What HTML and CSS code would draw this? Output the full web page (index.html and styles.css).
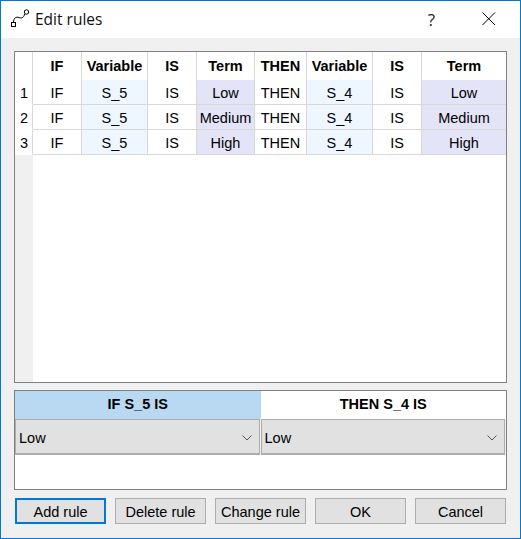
FILE: index.html
```html
<!DOCTYPE html>
<html lang="en">
<head>
<meta charset="utf-8">
<title>Edit rules</title>
<link rel="stylesheet" href="styles.css">
</head>
<body>
<div class="window">
  <header class="titlebar">
    <svg class="app-icon" width="20" height="20" viewBox="0 0 20 20" fill="none" stroke="#000" stroke-width="1">
      <rect x="0.5" y="13.5" width="4" height="4"/>
      <path d="M2.5 13.5 C2.5 9 5 7.5 8 8.5 C10.5 9.5 12.5 9 13.8 5"/>
      <circle cx="15.5" cy="3" r="2.2"/>
    </svg>
    <span class="title">Edit rules</span>
    <span class="help">?</span>
    <svg class="close" width="14" height="14" viewBox="0 0 14 14" fill="none" stroke="#000" stroke-width="1"><path d="M0.5 0.5 L13 13 M13 0.5 L0.5 13"/></svg>
  </header>
  <main class="content">
    <section class="table-box">
      <div class="grid">
        <div class="corner"></div>
        <div class="head">IF</div><div class="head">Variable</div><div class="head">IS</div><div class="head">Term</div><div class="head">THEN</div><div class="head">Variable</div><div class="head">IS</div><div class="head last">Term</div>

        <div class="rowno">1</div>
        <div class="cell">IF</div><div class="cell var">S_5</div><div class="cell">IS</div><div class="cell term">Low</div><div class="cell">THEN</div><div class="cell var">S_4</div><div class="cell">IS</div><div class="cell term last">Low</div>

        <div class="rowno">2</div>
        <div class="cell">IF</div><div class="cell var">S_5</div><div class="cell">IS</div><div class="cell term">Medium</div><div class="cell">THEN</div><div class="cell var">S_4</div><div class="cell">IS</div><div class="cell term last">Medium</div>

        <div class="rowno">3</div>
        <div class="cell">IF</div><div class="cell var">S_5</div><div class="cell">IS</div><div class="cell term">High</div><div class="cell">THEN</div><div class="cell var">S_4</div><div class="cell">IS</div><div class="cell term last">High</div>

        <div class="gutter"></div>
      </div>
    </section>
    <section class="editor">
      <div class="tabs">
        <div class="tab active">IF S_5 IS</div>
        <div class="tab">THEN S_4 IS</div>
      </div>
      <div class="combos">
        <div class="combo"><span>Low</span><svg width="10" height="6" viewBox="0 0 10 6" fill="none" stroke="#555"><path d="M0.5 0.5 L5 5 L9.5 0.5"/></svg></div>
        <div class="combo"><span>Low</span><svg width="10" height="6" viewBox="0 0 10 6" fill="none" stroke="#555"><path d="M0.5 0.5 L5 5 L9.5 0.5"/></svg></div>
      </div>
    </section>
    <footer class="buttons">
      <button class="btn default">Add rule</button>
      <button class="btn">Delete rule</button>
      <button class="btn">Change rule</button>
      <button class="btn">OK</button>
      <button class="btn">Cancel</button>
    </footer>
  </main>
</div>
</body>
</html>
```
FILE: styles.css
```css
* { box-sizing: border-box; }
html, body { margin: 0; padding: 0; }
body {
  width: 521px;
  height: 539px;
  overflow: hidden;
  font-family: "Liberation Sans", Arial, sans-serif;
  font-size: 14.5px;
  color: #000;
}
.window {
  width: 521px;
  height: 539px;
  border: 1px solid #0078d7;
  background: #f0f0f0;
  display: flex;
  flex-direction: column;
}
.titlebar {
  height: 37px;
  background: #fff;
  display: flex;
  align-items: center;
  padding: 0 0 1px 10px;
  flex: none;
}
.app-icon { flex: none; }
.title {
  font-family: "Open Sans", sans-serif;
  font-size: 15.5px;
  margin-left: 4px;
  flex: 1;
  color: #111;
}
.help {
  font-family: "Open Sans", sans-serif;
  font-size: 17px;
  margin-right: 47px;
  color: #222;
}
.close { margin-right: 24px; flex: none; }
.content {
  flex: 1;
  padding: 13px 13px 0;
  display: flex;
  flex-direction: column;
}
.table-box {
  height: 332px;
  border: 1px solid #808080;
  background: #fff;
  flex: none;
}
.grid {
  height: 100%;
  display: grid;
  grid-template-columns: 18px 49px 66px 49px 58px 52px 66px 49px 84px;
  grid-template-rows: 28px 25px 25px 25px 1fr;
}
.corner { background: #fff; border-right: 1px solid #d8d8d8; }
.head, .cell, .rowno {
  display: flex;
  align-items: center;
  justify-content: center;
  border-right: 1px solid #d8d8d8;
}
.head { font-weight: 700; background: #fff; }
.head.last, .cell.last { border-right: none; }
.cell { border-bottom: 1px solid #d8d8d8; background: #fff; padding-top: 1px; }
.rowno {
  background: #fff;
  border-bottom: 1px solid #fff;
  justify-content: flex-start;
  padding: 1px 0 0 5px;
}
.var { background: #eef7ff; }
.term { background: #e4e4f8; }
.gutter { background: #f0f0f0; grid-column: 1; }
.editor {
  margin-top: 7px;
  height: 100px;
  border: 1px solid #808080;
  background: #fff;
  flex: none;
}
.tabs { display: flex; height: 28px; }
.tab {
  flex: 1;
  display: flex;
  align-items: center;
  justify-content: center;
  font-weight: 700;
  background: #fff;
  padding-bottom: 2px;
}
.tab.active { background: #b9d9f2; }
.combos { display: flex; gap: 1px; height: 36px; background: #f0f0f0; padding-right: 1px; }
.combo {
  flex: 1;
  display: flex;
  align-items: center;
  justify-content: space-between;
  background: #e1e1e1;
  border: 1px solid #adadad;
  border-bottom-width: 2px;
  padding: 2px 7px 0 3px;
}
.buttons {
  display: flex;
  gap: 9px;
  margin-top: 8px;
  padding-left: 1px;
}
.btn {
  width: 91px;
  height: 26px;
  background: #e1e1e1;
  border: 1px solid #adadad;
  font: inherit;
  color: #000;
  padding: 1px 0 0;
}
.btn.default { border: 2px solid #0078d7; }
```
